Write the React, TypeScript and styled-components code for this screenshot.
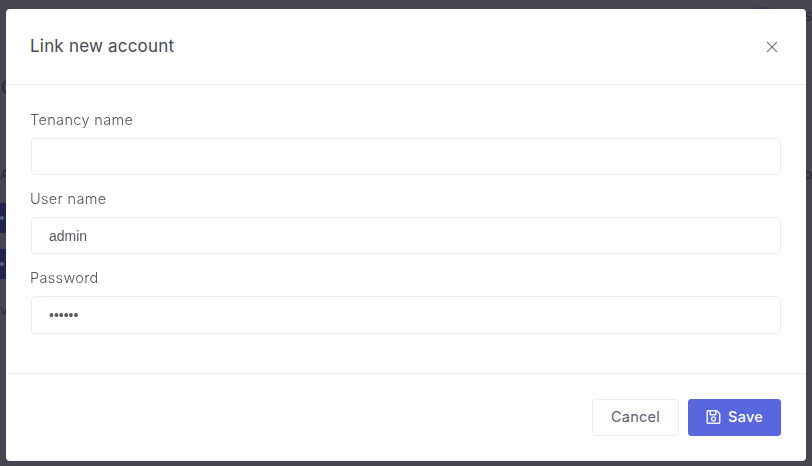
import React from "react";
import styled, { createGlobalStyle } from "styled-components";
import { X } from "lucide-react";

const GlobalStyle = createGlobalStyle`
  html, body {
    margin: 0;
    height: 100%;
    overflow: hidden;
    background: #47454f;
    font-family: "Inter", "Lato", sans-serif;
  }
`;

/* the dimmed page that peeks out around the dialog */
const BackPage = styled.div`
  width: 812px;
  height: 466px;
  box-sizing: border-box;
  background: #47454f;
  color: #2c2a3e;
  overflow: hidden;
`;

const BackTop = styled.div`
  display: flex;
  justify-content: flex-end;
  gap: 32px;
  height: 77px;
  padding-top: 7px;
  box-sizing: border-box;
  font-size: 15px;
  line-height: 18px;
`;

const BackAvatar = styled.div`
  width: 17px;
  height: 10px;
  background: #3b3b5a;
`;

const BackHeading = styled.div`
  height: 88px;
  padding-left: 1px;
  font-size: 18px;
  font-weight: 500;
`;

const BackTableHead = styled.div`
  display: flex;
  justify-content: space-between;
  height: 38px;
  font-size: 13px;
  font-weight: 600;
  line-height: 18px;
`;

const BackRow = styled.div`
  height: 46px;
`;

const BackAction = styled.div`
  position: relative;
  width: 6px;
  height: 30px;
  background: #23234f;
`;

const BackDot = styled.span`
  position: absolute;
  left: 0;
  top: 13px;
  width: 4px;
  height: 4px;
  border-radius: 50%;
  background: #5f6080;
`;

const BackNote = styled.div`
  margin-top: 6px;
  font-size: 14px;
  color: #2f2d3c;
`;

const Modal = styled.div`
  position: fixed;
  left: 6px;
  top: 9px;
  display: flex;
  flex-direction: column;
  width: 800px;
  height: 452px;
  background: #fff;
  border-radius: 4px;
`;

const Header = styled.div`
  display: flex;
  align-items: center;
  justify-content: space-between;
  height: 75px;
  padding: 0 25px 0 24px;
  border-bottom: 1px solid #ebedf2;
`;

const Title = styled.h5`
  margin: 0 0 2px;
  font-size: 17px;
  font-weight: 400;
  letter-spacing: 0.2px;
  color: #48484f;
`;

const CloseButton = styled.button`
  display: flex;
  padding: 0;
  border: 0;
  background: none;
  color: #74788d;
`;

const Body = styled.div`
  flex: 1;
  display: flex;
  flex-direction: column;
  padding: 25px 25px 0;
`;

const Field = styled.div`
  display: flex;
  flex-direction: column;
  margin-bottom: 14px;
`;

const Label = styled.label`
  height: 28px;
  margin-left: -1px;
  font-size: 14.5px;
  font-weight: 300;
  line-height: 20px;
  letter-spacing: 0.35px;
  color: #54545c;
`;

const Input = styled.input<{ $tall?: boolean }>`
  box-sizing: border-box;
  width: 100%;
  height: ${(p) => (p.$tall ? "38px" : "37px")};
  padding: 0 17px;
  border: 1px solid #ebedf2;
  border-radius: 4px;
  outline: none;
  font-family: "Liberation Sans", sans-serif;
  font-size: 14px;
  color: #575962;
  background: #fff;
`;

const Footer = styled.div`
  display: flex;
  justify-content: flex-end;
  gap: 9px;
  height: 88px;
  box-sizing: border-box;
  padding: 25px 25px 0;
  border-top: 1px solid #ebedf2;
`;

const Button = styled.button<{ $primary?: boolean }>`
  display: flex;
  align-items: center;
  justify-content: center;
  gap: 7px;
  height: 37px;
  box-sizing: border-box;
  padding: 0 0 2px;
  border-radius: 3px;
  border: 1px solid ${(p) => (p.$primary ? "#5867dd" : "#ebedf2")};
  background: ${(p) => (p.$primary ? "#5867dd" : "#fff")};
  color: ${(p) => (p.$primary ? "#fff" : "#595d6e")};
  width: ${(p) => (p.$primary ? "93px" : "87px")};
  font-family: inherit;
  font-size: 14.5px;
  font-weight: ${(p) => (p.$primary ? 500 : 400)};
  letter-spacing: 0.25px;
`;

const SaveIcon = () => (
  <svg width="15" height="16" viewBox="0 0 448 512" fill="#eef0fc">
    <path d="M433.9 129.9l-83.9-83.9A48 48 0 0 0 316.1 32H48C21.5 32 0 53.5 0 80v352c0 26.5 21.5 48 48 48h352c26.5 0 48-21.5 48-48V163.9a48 48 0 0 0-14.1-34zM272 80v80H144V80h128zm122 352H54a6 6 0 0 1-6-6V86a6 6 0 0 1 6-6h42v104c0 13.3 10.7 24 24 24h176c13.3 0 24-10.7 24-24V83.9l78.2 78.2a6 6 0 0 1 1.8 4.2V426a6 6 0 0 1-6 6zM224 232c-48.5 0-88 39.5-88 88s39.5 88 88 88 88-39.5 88-88-39.5-88-88-88zm0 128c-22.1 0-40-17.9-40-40s17.9-40 40-40 40 17.9 40 40-17.9 40-40 40z" />
  </svg>
);

export default function App() {
  return (
    <>
      <GlobalStyle />
      <BackPage>
        <BackTop>
          <BackAvatar />
          <span>s</span>
        </BackTop>
        <BackHeading>C</BackHeading>
        <BackTableHead>
          <span>A</span>
          <span>o</span>
        </BackTableHead>
        <BackRow>
          <BackAction>
            <BackDot />
          </BackAction>
        </BackRow>
        <BackRow>
          <BackAction>
            <BackDot />
          </BackAction>
        </BackRow>
        <BackNote>v</BackNote>
      </BackPage>
      <Modal>
        <Header>
          <Title>Link new account</Title>
          <CloseButton>
            <X size={18} strokeWidth={1.5} />
          </CloseButton>
        </Header>
        <Body>
          <Field>
            <Label>Tenancy name</Label>
            <Input defaultValue="" />
          </Field>
          <Field>
            <Label>User name</Label>
            <Input defaultValue="admin" />
          </Field>
          <Field>
            <Label>Password</Label>
            <Input $tall type="password" defaultValue="123456" />
          </Field>
        </Body>
        <Footer>
          <Button>Cancel</Button>
          <Button $primary>
            <SaveIcon />
            Save
          </Button>
        </Footer>
      </Modal>
    </>
  );
}
